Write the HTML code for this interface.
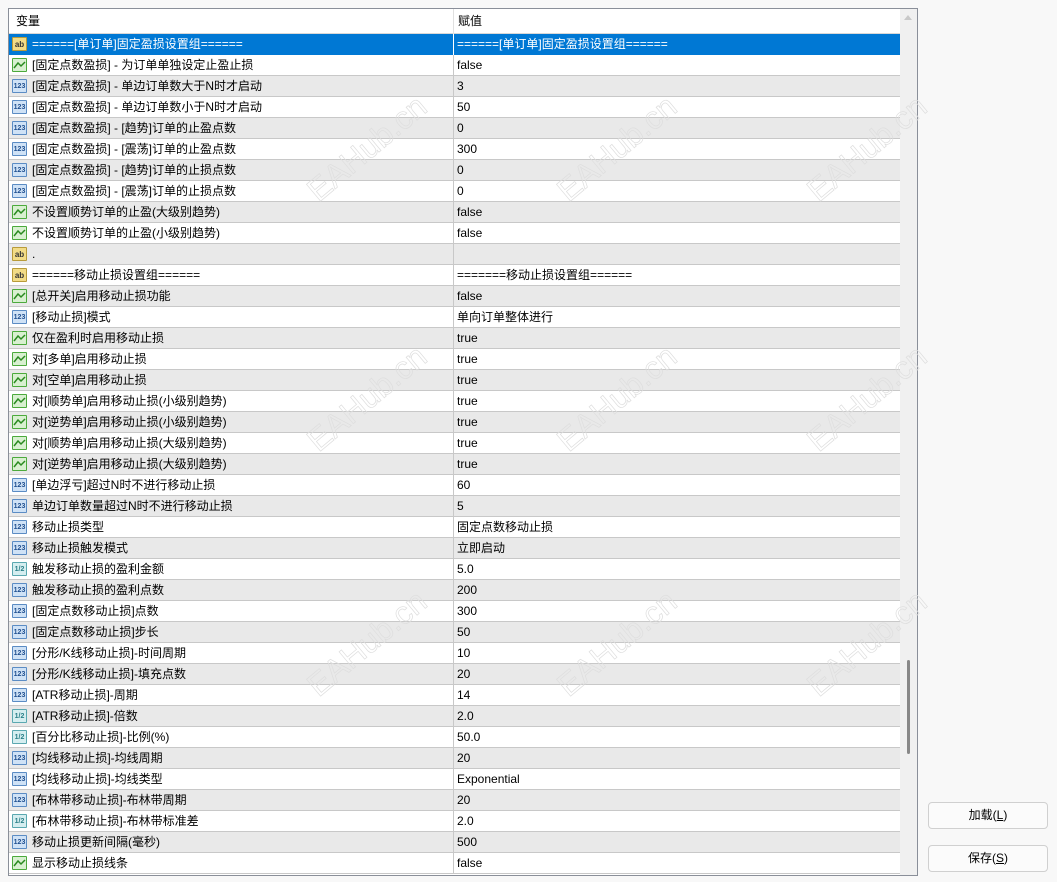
<!DOCTYPE html>
<html><head><meta charset="utf-8"><style>
*{margin:0;padding:0;box-sizing:border-box}
html,body{width:1057px;height:882px;overflow:hidden}
body{background:#f8f8f8;font-family:"Liberation Sans","Noto Sans CJK SC",sans-serif;font-size:12px;color:#000;position:relative}
#tbl{position:absolute;left:8px;top:8px;width:910px;height:868px;border:1px solid #8a8f99;background:#fff;overflow:hidden}
.hd{position:absolute;left:0;top:0;width:891px;height:25px;background:#fff;border-bottom:1px solid #d8d8d8}
.hd span{position:absolute;top:0;line-height:25px}
.r{position:absolute;left:0;width:891px;height:21px;border-bottom:1px solid #c8c8c8;white-space:nowrap;line-height:20px}
.r.g{background:#e9e9e9}
.r.s{background:#0078d4;color:#fff;border-bottom-color:#0078d4}
.r .n{position:absolute;left:23px;top:0}
.r .v{position:absolute;left:448px;top:0}
.r .d{position:absolute;left:444px;top:0;width:1px;height:21px;background:#c8c8c8}
.r.s .d{background:#fff}
.ic{position:absolute;left:3px;top:3px;width:15px;height:14px;border-radius:1px;font-size:7px;font-weight:bold;line-height:13px;text-align:center}
.ab{background:#f2dc87;border:1px solid #b89b3a;color:#333;font-size:8px}
.bl{background:#d8f0d0;border:1px solid #4caa3c}
.n1{background:#cfe2f6;border:1px solid #5b8cc4;color:#1f4f8f}
.hf{background:#d5eef0;border:1px solid #5aa8b0;color:#2a7f88}
#sb{position:absolute;left:891px;top:0;width:17px;height:866px;background:#f0f0f0}
#th{position:absolute;left:7px;top:651px;width:3px;height:94px;background:#888;border-radius:2px}
.btn{position:absolute;left:928px;width:120px;height:27px;border:1px solid #d0d0d0;border-radius:4px;background:#fbfbfb;text-align:center;line-height:25px;font-size:12px}
#wmw{position:absolute;left:0;top:0;width:1057px;height:882px;overflow:hidden;pointer-events:none}
.wm{position:absolute;font-size:32px;color:transparent;-webkit-text-stroke:0.7px #dedede;transform:rotate(-40deg);font-family:"Liberation Sans",sans-serif;white-space:nowrap}
</style></head><body>
<div id="tbl">
<div class="hd"><span style="left:7px">变量</span><span style="left:449px">赋值</span><div style="position:absolute;left:444px;top:0;width:1px;height:25px;background:#e0e0e0"></div></div>
<div class="r s" style="top:25px"><div class="ic ab">ab</div><span class="n">======[单订单]固定盈损设置组======</span><div class="d"></div><span class="v">======[单订单]固定盈损设置组======</span></div>
<div class="r" style="top:46px"><div class="ic bl"><svg width="13" height="12"><path d="M1 9 L5 4 L8 7 L12 3" stroke="#2a8a20" stroke-width="1.5" fill="none"/></svg></div><span class="n">[固定点数盈损] - 为订单单独设定止盈止损</span><div class="d"></div><span class="v">false</span></div>
<div class="r g" style="top:67px"><div class="ic n1">123</div><span class="n">[固定点数盈损] - 单边订单数大于N时才启动</span><div class="d"></div><span class="v">3</span></div>
<div class="r" style="top:88px"><div class="ic n1">123</div><span class="n">[固定点数盈损] - 单边订单数小于N时才启动</span><div class="d"></div><span class="v">50</span></div>
<div class="r g" style="top:109px"><div class="ic n1">123</div><span class="n">[固定点数盈损] - [趋势]订单的止盈点数</span><div class="d"></div><span class="v">0</span></div>
<div class="r" style="top:130px"><div class="ic n1">123</div><span class="n">[固定点数盈损] - [震荡]订单的止盈点数</span><div class="d"></div><span class="v">300</span></div>
<div class="r g" style="top:151px"><div class="ic n1">123</div><span class="n">[固定点数盈损] - [趋势]订单的止损点数</span><div class="d"></div><span class="v">0</span></div>
<div class="r" style="top:172px"><div class="ic n1">123</div><span class="n">[固定点数盈损] - [震荡]订单的止损点数</span><div class="d"></div><span class="v">0</span></div>
<div class="r g" style="top:193px"><div class="ic bl"><svg width="13" height="12"><path d="M1 9 L5 4 L8 7 L12 3" stroke="#2a8a20" stroke-width="1.5" fill="none"/></svg></div><span class="n">不设置顺势订单的止盈(大级别趋势)</span><div class="d"></div><span class="v">false</span></div>
<div class="r" style="top:214px"><div class="ic bl"><svg width="13" height="12"><path d="M1 9 L5 4 L8 7 L12 3" stroke="#2a8a20" stroke-width="1.5" fill="none"/></svg></div><span class="n">不设置顺势订单的止盈(小级别趋势)</span><div class="d"></div><span class="v">false</span></div>
<div class="r g" style="top:235px"><div class="ic ab">ab</div><span class="n">.</span><div class="d"></div><span class="v"></span></div>
<div class="r" style="top:256px"><div class="ic ab">ab</div><span class="n">======移动止损设置组======</span><div class="d"></div><span class="v">=======移动止损设置组======</span></div>
<div class="r g" style="top:277px"><div class="ic bl"><svg width="13" height="12"><path d="M1 9 L5 4 L8 7 L12 3" stroke="#2a8a20" stroke-width="1.5" fill="none"/></svg></div><span class="n">[总开关]启用移动止损功能</span><div class="d"></div><span class="v">false</span></div>
<div class="r" style="top:298px"><div class="ic n1">123</div><span class="n">[移动止损]模式</span><div class="d"></div><span class="v">单向订单整体进行</span></div>
<div class="r g" style="top:319px"><div class="ic bl"><svg width="13" height="12"><path d="M1 9 L5 4 L8 7 L12 3" stroke="#2a8a20" stroke-width="1.5" fill="none"/></svg></div><span class="n">仅在盈利时启用移动止损</span><div class="d"></div><span class="v">true</span></div>
<div class="r" style="top:340px"><div class="ic bl"><svg width="13" height="12"><path d="M1 9 L5 4 L8 7 L12 3" stroke="#2a8a20" stroke-width="1.5" fill="none"/></svg></div><span class="n">对[多单]启用移动止损</span><div class="d"></div><span class="v">true</span></div>
<div class="r g" style="top:361px"><div class="ic bl"><svg width="13" height="12"><path d="M1 9 L5 4 L8 7 L12 3" stroke="#2a8a20" stroke-width="1.5" fill="none"/></svg></div><span class="n">对[空单]启用移动止损</span><div class="d"></div><span class="v">true</span></div>
<div class="r" style="top:382px"><div class="ic bl"><svg width="13" height="12"><path d="M1 9 L5 4 L8 7 L12 3" stroke="#2a8a20" stroke-width="1.5" fill="none"/></svg></div><span class="n">对[顺势单]启用移动止损(小级别趋势)</span><div class="d"></div><span class="v">true</span></div>
<div class="r g" style="top:403px"><div class="ic bl"><svg width="13" height="12"><path d="M1 9 L5 4 L8 7 L12 3" stroke="#2a8a20" stroke-width="1.5" fill="none"/></svg></div><span class="n">对[逆势单]启用移动止损(小级别趋势)</span><div class="d"></div><span class="v">true</span></div>
<div class="r" style="top:424px"><div class="ic bl"><svg width="13" height="12"><path d="M1 9 L5 4 L8 7 L12 3" stroke="#2a8a20" stroke-width="1.5" fill="none"/></svg></div><span class="n">对[顺势单]启用移动止损(大级别趋势)</span><div class="d"></div><span class="v">true</span></div>
<div class="r g" style="top:445px"><div class="ic bl"><svg width="13" height="12"><path d="M1 9 L5 4 L8 7 L12 3" stroke="#2a8a20" stroke-width="1.5" fill="none"/></svg></div><span class="n">对[逆势单]启用移动止损(大级别趋势)</span><div class="d"></div><span class="v">true</span></div>
<div class="r" style="top:466px"><div class="ic n1">123</div><span class="n">[单边浮亏]超过N时不进行移动止损</span><div class="d"></div><span class="v">60</span></div>
<div class="r g" style="top:487px"><div class="ic n1">123</div><span class="n">单边订单数量超过N时不进行移动止损</span><div class="d"></div><span class="v">5</span></div>
<div class="r" style="top:508px"><div class="ic n1">123</div><span class="n">移动止损类型</span><div class="d"></div><span class="v">固定点数移动止损</span></div>
<div class="r g" style="top:529px"><div class="ic n1">123</div><span class="n">移动止损触发模式</span><div class="d"></div><span class="v">立即启动</span></div>
<div class="r" style="top:550px"><div class="ic hf">1/2</div><span class="n">触发移动止损的盈利金额</span><div class="d"></div><span class="v">5.0</span></div>
<div class="r g" style="top:571px"><div class="ic n1">123</div><span class="n">触发移动止损的盈利点数</span><div class="d"></div><span class="v">200</span></div>
<div class="r" style="top:592px"><div class="ic n1">123</div><span class="n">[固定点数移动止损]点数</span><div class="d"></div><span class="v">300</span></div>
<div class="r g" style="top:613px"><div class="ic n1">123</div><span class="n">[固定点数移动止损]步长</span><div class="d"></div><span class="v">50</span></div>
<div class="r" style="top:634px"><div class="ic n1">123</div><span class="n">[分形/K线移动止损]-时间周期</span><div class="d"></div><span class="v">10</span></div>
<div class="r g" style="top:655px"><div class="ic n1">123</div><span class="n">[分形/K线移动止损]-填充点数</span><div class="d"></div><span class="v">20</span></div>
<div class="r" style="top:676px"><div class="ic n1">123</div><span class="n">[ATR移动止损]-周期</span><div class="d"></div><span class="v">14</span></div>
<div class="r g" style="top:697px"><div class="ic hf">1/2</div><span class="n">[ATR移动止损]-倍数</span><div class="d"></div><span class="v">2.0</span></div>
<div class="r" style="top:718px"><div class="ic hf">1/2</div><span class="n">[百分比移动止损]-比例(%)</span><div class="d"></div><span class="v">50.0</span></div>
<div class="r g" style="top:739px"><div class="ic n1">123</div><span class="n">[均线移动止损]-均线周期</span><div class="d"></div><span class="v">20</span></div>
<div class="r" style="top:760px"><div class="ic n1">123</div><span class="n">[均线移动止损]-均线类型</span><div class="d"></div><span class="v">Exponential</span></div>
<div class="r g" style="top:781px"><div class="ic n1">123</div><span class="n">[布林带移动止损]-布林带周期</span><div class="d"></div><span class="v">20</span></div>
<div class="r" style="top:802px"><div class="ic hf">1/2</div><span class="n">[布林带移动止损]-布林带标准差</span><div class="d"></div><span class="v">2.0</span></div>
<div class="r g" style="top:823px"><div class="ic n1">123</div><span class="n">移动止损更新间隔(毫秒)</span><div class="d"></div><span class="v">500</span></div>
<div class="r" style="top:844px"><div class="ic bl"><svg width="13" height="12"><path d="M1 9 L5 4 L8 7 L12 3" stroke="#2a8a20" stroke-width="1.5" fill="none"/></svg></div><span class="n">显示移动止损线条</span><div class="d"></div><span class="v">false</span></div>
<div id="sb"><div style="position:absolute;left:4px;top:6px;width:0;height:0;border-left:4px solid transparent;border-right:4px solid transparent;border-bottom:5px solid #c8c8c8"></div><div id="th"></div></div>
</div>
<div class="btn" style="top:802px">加载(<u>L</u>)</div>
<div class="btn" style="top:845px">保存(<u>S</u>)</div>
<div id="wmw">
<div class="wm" style="left:295px;top:130px">EAHub.cn</div>
<div class="wm" style="left:545px;top:130px">EAHub.cn</div>
<div class="wm" style="left:795px;top:130px">EAHub.cn</div>
<div class="wm" style="left:295px;top:380px">EAHub.cn</div>
<div class="wm" style="left:545px;top:380px">EAHub.cn</div>
<div class="wm" style="left:795px;top:380px">EAHub.cn</div>
<div class="wm" style="left:295px;top:625px">EAHub.cn</div>
<div class="wm" style="left:545px;top:625px">EAHub.cn</div>
<div class="wm" style="left:795px;top:625px">EAHub.cn</div>
</div>
</body></html>
